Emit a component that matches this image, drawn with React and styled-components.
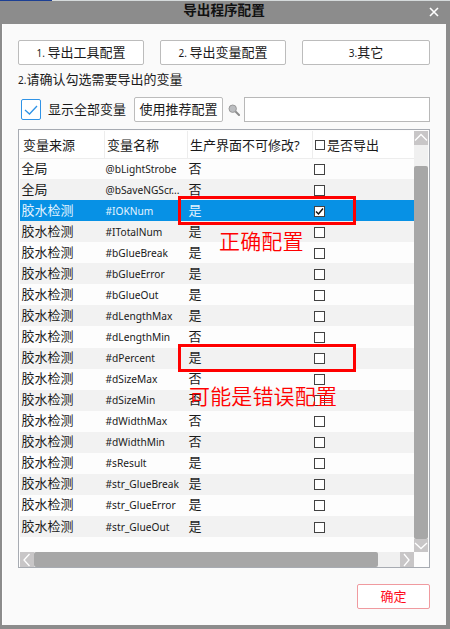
import React from "react";
import styled, { createGlobalStyle } from "styled-components";

const Global = createGlobalStyle`
  * { box-sizing: border-box; }
  body { margin: 0; }
`;

const Window = styled.main`
  position: relative;
  width: 450px;
  height: 629px;
  overflow: hidden;
  background: #8c8c8c;
  font: 13px/18px "Noto Sans", "Noto Sans CJK SC", sans-serif;
  color: #1a1a1a;
  display: flex;
  flex-direction: column;
`;
const Backdrop = styled.div`
  height: 1px;
  flex: none;
  background: linear-gradient(90deg, #1c3f94 52px, #d5dadb 52px);
`;
const TitleBar = styled.header`
  height: 23px;
  flex: none;
  display: grid;
  grid-template-columns: 30px 1fr 25px;
  align-items: start;
  text-align: center;
`;
const Title = styled.h1`
  grid-column: 2;
  margin: 0;
  padding-right: 7px;
  font-size: 13.6px;
  font-weight: 700;
  line-height: 18px;
  color: #111;
`;
const Close = styled.button`
  border: 0;
  padding: 6px 0 0 4px;
  background: none;
  display: block;
  width: 14px;
  line-height: 0;
`;
const Body = styled.section`
  flex: none;
  height: 601px;
  margin: 0 4px 0 2px;
  padding: 16px 16px 0;
  background: #fafafa;
  border-left: 1px solid #fff;
  display: flex;
  flex-direction: column;
`;
const Steps = styled.nav`
  display: grid;
  grid-template-columns: 126px 126px 128px;
  gap: 16px;
  margin-left: -1px;
`;
const Button = styled.button`
  height: 25px;
  padding: 0 0 1px;
  border: 1px solid ${(p) => (p.$danger ? "#f09a9f" : "#bcbcbc")};
  border-radius: 2px;
  background: #fff;
  color: ${(p) => (p.$danger ? "#ff0b1b" : "#1a1a1a")};
  font: inherit;
  line-height: 20px;
  width: ${(p) => p.$width || "auto"};
  flex: none;
`;
const Small = styled.span`
  font-size: 10px;
`;
const Hint = styled.p`
  margin: 4px 0 0 -1px;
  height: 21px;
  line-height: 20px;
`;
const Filters = styled.div`
  display: flex;
  align-items: center;
  height: 25px;
  margin: 7px 0 0 2px;
`;
const ShowAll = styled.label`
  display: flex;
  align-items: center;
  gap: 7px;
  width: 113px;
  line-height: 20px;
`;
const ShowAllText = styled.span`
  padding-bottom: 2px;
`;
const BlueBox = styled.span`
  width: 20px;
  height: 21px;
  border: 1px solid #2f93e6;
  border-radius: 2px;
  background: #fff;
  display: grid;
  place-items: center;
`;
const SearchIcon = styled.svg`
  width: 12px;
  height: 12px;
  margin: 0 4px 0 5px;
`;
const Search = styled.input`
  width: 186px;
  height: 25px;
  border: 1px solid #b8b8b8;
  background: #fff;
`;
const TableFrame = styled.div`
  width: 412px;
  height: 439px;
  flex: none;
  margin: 7px 0 0 -1px;
  border: 1px solid #a7abb2;
  padding: 1px;
  background: #fdfdfd;
  display: grid;
  grid-template: 421px 15px / 394px 14px;
`;
const Grid = styled.div`
  overflow: hidden;
`;
const HeadRow = styled.div`
  display: grid;
  grid-template-columns: 85px 83px 125px 1fr;
  height: 28px;
  border-bottom: 1px solid #ededed;
  background: #fff;
`;
const HeadCell = styled.div`
  display: flex;
  align-items: center;
  padding: 0 0 0 2px;
  white-space: nowrap;
  border-right: 1px solid #ededed;
  &:first-child { padding-left: 3px; }
  &:last-child { border: 0; }
`;
const Row = styled.div`
  display: grid;
  grid-template-columns: 85px 82px 125px 1fr;
  align-items: center;
  height: 21.07px;
  padding-left: 1.5px;
  white-space: nowrap;
  background: ${(p) => (p.$selected ? "#0791e5" : p.$striped ? "#f2f2f2" : "#fdfdfd")};
  color: ${(p) => (p.$selected ? "#e4f4ff" : "#1a1a1a")};
  &:nth-child(2) { height: 20px; }
`;
const Cell = styled.span`
  padding-bottom: 2px;
`;
const Name = styled.span`
  font-size: 10.2px;
  margin-left: -1px;
`;
const Box = styled.span`
  width: ${(p) => (p.$head ? 10 : 11)}px;
  height: ${(p) => (p.$head ? 10 : 11)}px;
  flex: none;
  margin-right: ${(p) => (p.$head ? "2px" : "0")};
  margin-top: ${(p) => (p.$head ? "0" : "1px")};
  border: 1px solid #424242;
  background: #fff;
  display: grid;
  place-items: center;
`;
const VBar = styled.div`
  display: grid;
  grid-template-rows: 14px 21px 373px 13px;
  background: #f0f0f0;
`;
const HBar = styled.div`
  display: grid;
  grid-template-columns: 14px 344px 22px 14px;
  background: #f0f0f0;
`;
const Arrow = styled.span`
  display: grid;
  place-items: center;
  background: #c8c6c7;
  overflow: hidden;
`;
const Thumb = styled.span`
  border-radius: 2px;
  background: #a7a7a7;
`;
const Footer = styled.footer`
  display: flex;
  justify-content: flex-end;
  padding: 16px 0 0;
  width: 411px;
`;
const Outline = styled.div`
  position: absolute;
  left: 178px;
  top: ${(p) => p.$top}px;
  width: 178px;
  height: ${(p) => p.$height}px;
  border: 3px solid #f00;
`;
const Note = styled.div`
  position: absolute;
  left: ${(p) => p.$left}px;
  top: ${(p) => p.$top}px;
  font: 350 21px/26px "Noto Sans CJK SC", sans-serif;
  letter-spacing: 0.15px;
  color: #f00;
  white-space: nowrap;
`;

const rows = [
  ["全局", "@bLightStrobe", "否"],
  ["全局", "@bSaveNGScr...", "否"],
  ["胶水检测", "#IOKNum", "是"],
  ["胶水检测", "#ITotalNum", "是"],
  ["胶水检测", "#bGlueBreak", "是"],
  ["胶水检测", "#bGlueError", "是"],
  ["胶水检测", "#bGlueOut", "是"],
  ["胶水检测", "#dLengthMax", "是"],
  ["胶水检测", "#dLengthMin", "否"],
  ["胶水检测", "#dPercent", "是"],
  ["胶水检测", "#dSizeMax", "否"],
  ["胶水检测", "#dSizeMin", "否"],
  ["胶水检测", "#dWidthMax", "否"],
  ["胶水检测", "#dWidthMin", "否"],
  ["胶水检测", "#sResult", "是"],
  ["胶水检测", "#str_GlueBreak", "是"],
  ["胶水检测", "#str_GlueError", "是"],
  ["胶水检测", "#str_GlueOut", "是"],
];

const arrowPaths = {
  up: "M1 9.5 7 3.5 13 9.5",
  down: "M1 4 7 9.5 13 4",
  left: "M9.5 1 4 7 9.5 13",
  right: "M4 1 9 7 4 13",
};
const ScrollArrow = ({ dir }) => (
  <Arrow>
    <svg width="14" height="14" viewBox="0 0 14 14">
      <path d={arrowPaths[dir]} fill="none" stroke="#fff" strokeWidth="1.3" />
    </svg>
  </Arrow>
);

export default function App() {
  return (
    <Window>
      <Global />
      <Backdrop />
      <TitleBar>
        <Title>导出程序配置</Title>
        <Close aria-label="关闭">
          <svg width="10" height="10" viewBox="0 0 10 10">
            <path d="M1 1 9 9M9 1 1 9" stroke="#fff" strokeWidth="1.6" />
          </svg>
        </Close>
      </TitleBar>
      <Body>
        <Steps>
          <Button><Small>1. </Small>导出工具配置</Button>
          <Button><Small>2. </Small>导出变量配置</Button>
          <Button><Small>3.</Small>其它</Button>
        </Steps>
        <Hint><Small>2.</Small>请确认勾选需要导出的变量</Hint>
        <Filters>
          <ShowAll>
            <BlueBox>
              <svg width="16" height="14" viewBox="0 0 16 14">
                <path d="M2 7 6.5 11 14 3" fill="none" stroke="#2f93e6" strokeWidth="1.3" />
              </svg>
            </BlueBox>
            <ShowAllText>显示全部变量</ShowAllText>
          </ShowAll>
          <Button $width="89px">使用推荐配置</Button>
          <SearchIcon viewBox="0 0 12 12">
            <path d="M7 7 11 11" stroke="#8b8b8b" strokeWidth="2" strokeLinecap="round" />
            <circle cx="4.7" cy="4.7" r="3.7" fill="#bbbdc0" stroke="#999" />
          </SearchIcon>
          <Search aria-label="搜索" />
        </Filters>
        <TableFrame>
          <Grid>
            <HeadRow>
              <HeadCell>变量来源</HeadCell>
              <HeadCell>变量名称</HeadCell>
              <HeadCell>生产界面不可修改?</HeadCell>
              <HeadCell><Box $head />是否导出</HeadCell>
            </HeadRow>
            {rows.map(([source, name, locked], i) => (
              <Row key={name} $selected={i === 2} $striped={i % 2 === 1}>
                <Cell>{source}</Cell>
                <Name>{name}</Name>
                <Cell>{locked}</Cell>
                <Box>
                  {i === 2 && (
                    <svg width="9" height="9" viewBox="0 0 9 9">
                      <path d="M1 4.5 3.5 7 8 1.5" fill="none" stroke="#111" strokeWidth="1.5" />
                    </svg>
                  )}
                </Box>
              </Row>
            ))}
          </Grid>
          <VBar>
            <ScrollArrow dir="up" />
            <span />
            <Thumb />
            <ScrollArrow dir="down" />
          </VBar>
          <HBar>
            <ScrollArrow dir="left" />
            <Thumb />
            <span />
            <ScrollArrow dir="right" />
          </HBar>
        </TableFrame>
        <Footer>
          <Button $danger $width="73px">确定</Button>
        </Footer>
      </Body>
      <Outline $top={196} $height={29} />
      <Note $left={219} $top={227}>正确配置</Note>
      <Outline $top={344} $height={28} />
      <Note $left={189} $top={382}>可能是错误配置</Note>
    </Window>
  );
}
